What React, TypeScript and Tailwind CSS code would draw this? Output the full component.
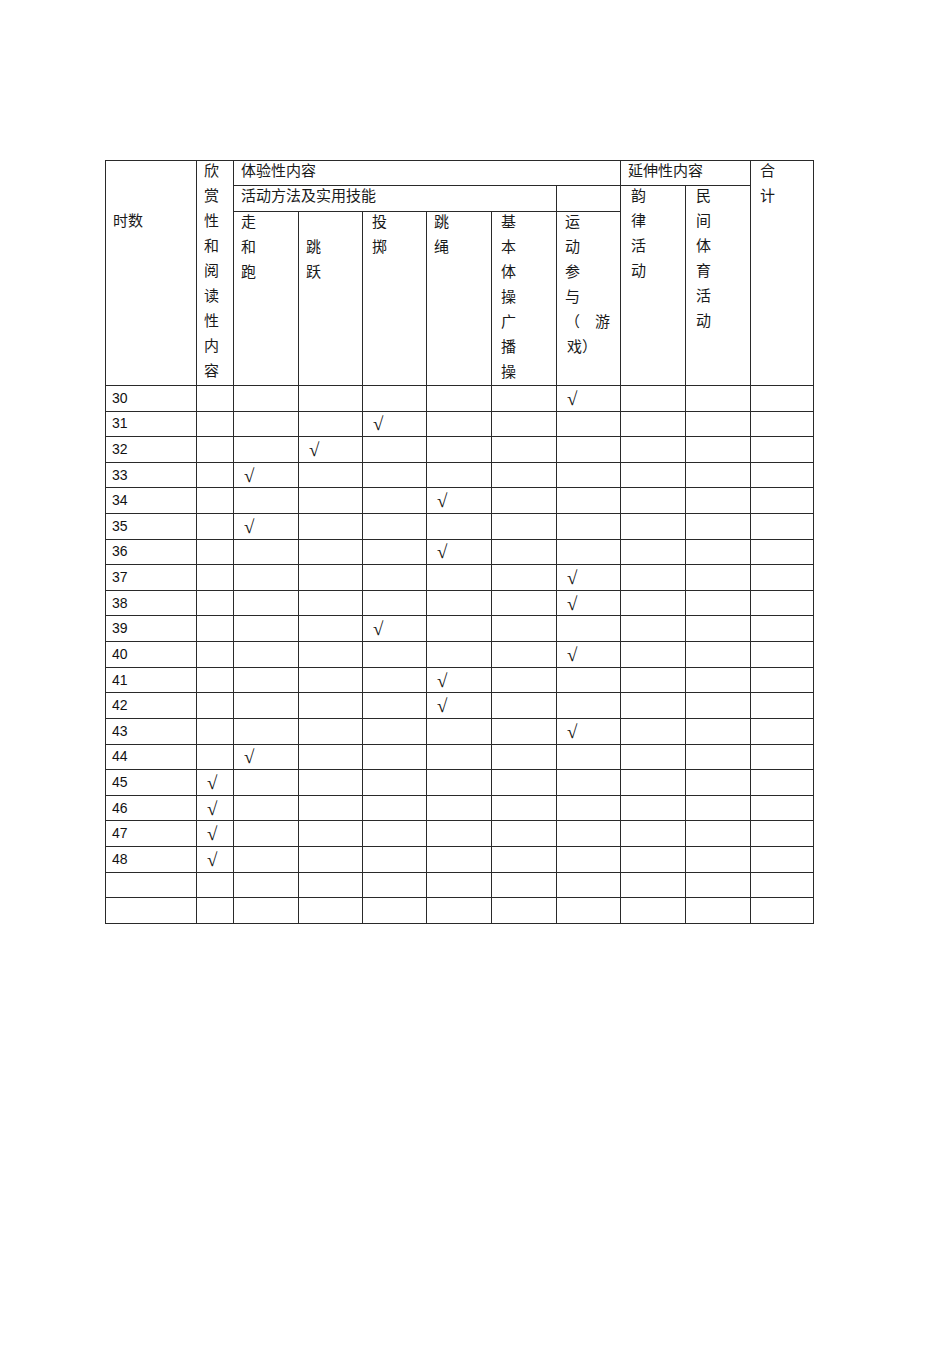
import React from "react";

// column index of the tick for each 时数 row (null = empty row)
const rows: { n: string; tick: number | null }[] = [
  { n: "30", tick: 7 },
  { n: "31", tick: 4 },
  { n: "32", tick: 3 },
  { n: "33", tick: 2 },
  { n: "34", tick: 5 },
  { n: "35", tick: 2 },
  { n: "36", tick: 5 },
  { n: "37", tick: 7 },
  { n: "38", tick: 7 },
  { n: "39", tick: 4 },
  { n: "40", tick: 7 },
  { n: "41", tick: 5 },
  { n: "42", tick: 5 },
  { n: "43", tick: 7 },
  { n: "44", tick: 2 },
  { n: "45", tick: 1 },
  { n: "46", tick: 1 },
  { n: "47", tick: 1 },
  { n: "48", tick: 1 },
  { n: "", tick: null },
  { n: "", tick: null },
];

function Lines({ chars }: { chars: string[] }) {
  return (
    <div className="-mt-[4px] leading-[25px]">
      {chars.map((c, i) => (
        <div key={i} className="h-[25px]">{c}</div>
      ))}
    </div>
  );
}

const cell = "bg-white pl-[7px] overflow-visible";

export default function App() {
  return (
    <div className="min-h-[1345px] bg-white pt-[160px] pl-[105px] font-['Noto_Sans_CJK_SC',sans-serif] text-[15px] text-[#1a1a1a]">
      <div className="w-fit bg-[#2a2a2a] p-px grid gap-px grid-cols-[90px_36px_64px_63px_63px_64px_64px_63px_64px_64px_62px] grid-rows-[24px_25px_173px_repeat(21,24.62px)]">
        <div className={`${cell} col-start-1 row-start-1 row-span-3 pt-[50px]`}>
          <Lines chars={["时数"]} />
        </div>
        <div className={`${cell} col-start-2 row-start-1 row-span-3`}>
          <Lines chars={["欣", "赏", "性", "和", "阅", "读", "性", "内", "容"]} />
        </div>
        <div className={`${cell} col-start-3 col-span-6 row-start-1`}>
          <Lines chars={["体验性内容"]} />
        </div>
        <div className={`${cell} col-start-9 col-span-2 row-start-1`}>
          <Lines chars={["延伸性内容"]} />
        </div>
        <div className={`${cell} col-start-11 row-start-1 row-span-3 pl-[9px]`}>
          <Lines chars={["合", "计"]} />
        </div>
        <div className={`${cell} col-start-3 col-span-5 row-start-2`}>
          <Lines chars={["活动方法及实用技能"]} />
        </div>
        <div className={`${cell} col-start-8 row-start-2`} />
        <div className={`${cell} col-start-9 row-start-2 row-span-2 pl-[10px]`}>
          <Lines chars={["韵", "律", "活", "动"]} />
        </div>
        <div className={`${cell} col-start-10 row-start-2 row-span-2 pl-[10px]`}>
          <Lines chars={["民", "间", "体", "育", "活", "动"]} />
        </div>

        <div className={`${cell} col-start-3 row-start-3`}>
          <Lines chars={["走", "和", "跑"]} />
        </div>
        <div className={`${cell} col-start-4 row-start-3`}>
          <Lines chars={["", "跳", "跃"]} />
        </div>
        <div className={`${cell} col-start-5 row-start-3 pl-[9px]`}>
          <Lines chars={["投", "掷"]} />
        </div>
        <div className={`${cell} col-start-6 row-start-3`}>
          <Lines chars={["跳", "绳"]} />
        </div>
        <div className={`${cell} col-start-7 row-start-3 pl-[9px]`}>
          <Lines chars={["基", "本", "体", "操", "广", "播", "操"]} />
        </div>
        <div className={`${cell} col-start-8 row-start-3 pl-[8px]`}>
          <div className="-mt-[4px] leading-[25px]">
            <div className="h-[25px]">运</div>
            <div className="h-[25px]">动</div>
            <div className="h-[25px]">参</div>
            <div className="h-[25px]">与</div>
            <div className="h-[25px] w-[45px] flex justify-between">
              <span>（</span>
              <span>游</span>
            </div>
            <div className="h-[25px] pl-[2px]">戏）</div>
          </div>
        </div>

        {rows.map((r, ri) => (
          <React.Fragment key={ri}>
            <div className="bg-white pl-[6px] flex items-center font-['Liberation_Sans',Arial,sans-serif] text-[14px] text-[#111]">
              {r.n}
            </div>
            {Array.from({ length: 10 }).map((_, ci) => (
              <div
                key={ci}
                className="bg-white pl-[10px] flex items-center font-['Liberation_Serif',serif] text-[19px] leading-none text-[#111]"
              >
                {r.tick === ci + 1 ? "√" : ""}
              </div>
            ))}
          </React.Fragment>
        ))}
      </div>
    </div>
  );
}
